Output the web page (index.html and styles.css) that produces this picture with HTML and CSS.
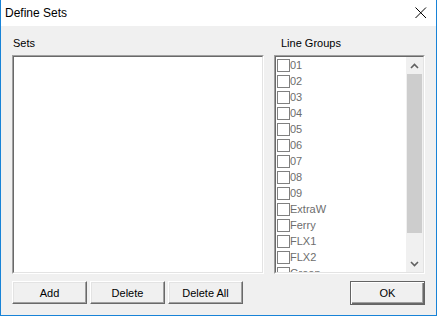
FILE: index.html
```html
<!DOCTYPE html>
<html>
<head>
<meta charset="utf-8">
<link rel="stylesheet" href="styles.css">
</head>
<body>
<div class="window">
  <div class="titlebar">
    <span class="title">Define Sets</span>
    <svg class="close" width="12" height="12" viewBox="0 0 12 12"><path d="M0.5 0.5 L11 11 M11 0.5 L0.5 11" stroke="#000" stroke-width="1" fill="none"/></svg>
  </div>
  <div class="client">
    <div class="col left">
      <div class="label">Sets</div>
      <div class="sunken sets-box"><div class="sunken-inner"></div></div>
      <div class="btnrow">
        <div class="btn">Add</div>
        <div class="btn">Delete</div>
        <div class="btn">Delete All</div>
      </div>
    </div>
    <div class="col right">
      <div class="label lg">Line Groups</div>
      <div class="sunken groups-box">
        <div class="sunken-inner groups-inner">
          <div class="items">
            <div class="item"><span class="cb"></span>01</div>
            <div class="item"><span class="cb"></span>02</div>
            <div class="item"><span class="cb"></span>03</div>
            <div class="item"><span class="cb"></span>04</div>
            <div class="item"><span class="cb"></span>05</div>
            <div class="item"><span class="cb"></span>06</div>
            <div class="item"><span class="cb"></span>07</div>
            <div class="item"><span class="cb"></span>08</div>
            <div class="item"><span class="cb"></span>09</div>
            <div class="item"><span class="cb"></span>ExtraW</div>
            <div class="item"><span class="cb"></span>Ferry</div>
            <div class="item"><span class="cb"></span>FLX1</div>
            <div class="item"><span class="cb"></span>FLX2</div>
            <div class="item"><span class="cb"></span>Green</div>
          </div>
          <div class="scrollbar">
            <div class="sb-btn"><svg width="9" height="6" viewBox="0 0 9 6"><path d="M1 5 L4.5 1.5 L8 5" stroke="#606060" stroke-width="1.6" fill="none"/></svg></div>
            <div class="sb-track"><div class="sb-thumb"></div></div>
            <div class="sb-btn"><svg width="9" height="6" viewBox="0 0 9 6"><path d="M1 1 L4.5 4.5 L8 1" stroke="#606060" stroke-width="1.6" fill="none"/></svg></div>
          </div>
        </div>
      </div>
      <div class="btnrow right-btns">
        <div class="btn default">OK</div>
      </div>
    </div>
  </div>
</div>
</body>
</html>
```
FILE: styles.css
```css
html, body {
  margin: 0;
  padding: 0;
  background: #ffffff;
}
.window {
  width: 437px;
  height: 316px;
  box-sizing: border-box;
  border-left: 1px solid #1883d7;
  border-right: 1px solid #1883d7;
  border-bottom: 1px solid #1883d7;
  display: flex;
  flex-direction: column;
  font-family: "Liberation Sans", Arial, sans-serif;
}
.titlebar {
  height: 26px;
  background: #ffffff;
  display: flex;
  align-items: center;
  justify-content: space-between;
  padding: 0 9px 0 4px;
}
.title {
  font-size: 12px;
  color: #000;
  position: relative;
  top: 0px;
}
.close {
  display: block;
}
.client {
  flex: 1;
  background: #f0f0f0;
  display: flex;
  padding: 11px 0 0 11px;
  gap: 10px;
}
.col {
  display: flex;
  flex-direction: column;
}
.left { width: 252px; }
.right { width: 151px; }
.label {
  font-size: 11px;
  line-height: 13px;
  height: 13px;
  color: #000;
  margin-bottom: 5px;
  padding-left: 1px;
}
.lg { padding-left: 7px; }
.sunken {
  height: 219px;
  box-sizing: border-box;
  border: 1px solid;
  border-color: #a0a0a0 #ffffff #ffffff #a0a0a0;
}
.sunken-inner {
  height: 100%;
  box-sizing: border-box;
  border: 1px solid;
  border-color: #696969 #e3e3e3 #e3e3e3 #696969;
  background: #ffffff;
}
.groups-inner {
  display: flex;
  overflow: hidden;
}
.items {
  flex: 1;
  overflow: hidden;
  padding-left: 1px;
}
.item {
  height: 16px;
  display: flex;
  align-items: center;
  font-size: 11px;
  color: #6d6d6d;
  white-space: nowrap;
}
.cb {
  width: 13px;
  height: 13px;
  box-sizing: border-box;
  border: 1px solid #808080;
  background: #fff;
  margin-right: 0px;
  flex: none;
}
.scrollbar {
  width: 17px;
  background: #f0f0f0;
  display: flex;
  flex-direction: column;
}
.sb-btn {
  height: 17px;
  display: flex;
  align-items: center;
  justify-content: center;
}
.sb-track {
  flex: 1;
  padding: 0 1px;
}
.sb-thumb {
  height: 159px;
  background: #cdcdcd;
}
.btnrow {
  display: flex;
  gap: 3px;
  margin-top: 7px;
}
.right-btns {
  justify-content: flex-end;
}
.btn {
  width: 75px;
  height: 23px;
  box-sizing: border-box;
  border: 1px solid;
  border-color: #ffffff #696969 #696969 #ffffff;
  box-shadow: inset -1px -1px #a0a0a0, inset 1px 1px #e3e3e3;
  background: #f0f0f0;
  font-size: 11px;
  color: #000;
  display: flex;
  align-items: center;
  justify-content: center;
}
.btn.default {
  height: 24px;
  border: 1px solid #646464;
  box-shadow: inset 1px 1px #ffffff, inset -1px -1px #696969, inset -2px -2px #a0a0a0;
}
```
